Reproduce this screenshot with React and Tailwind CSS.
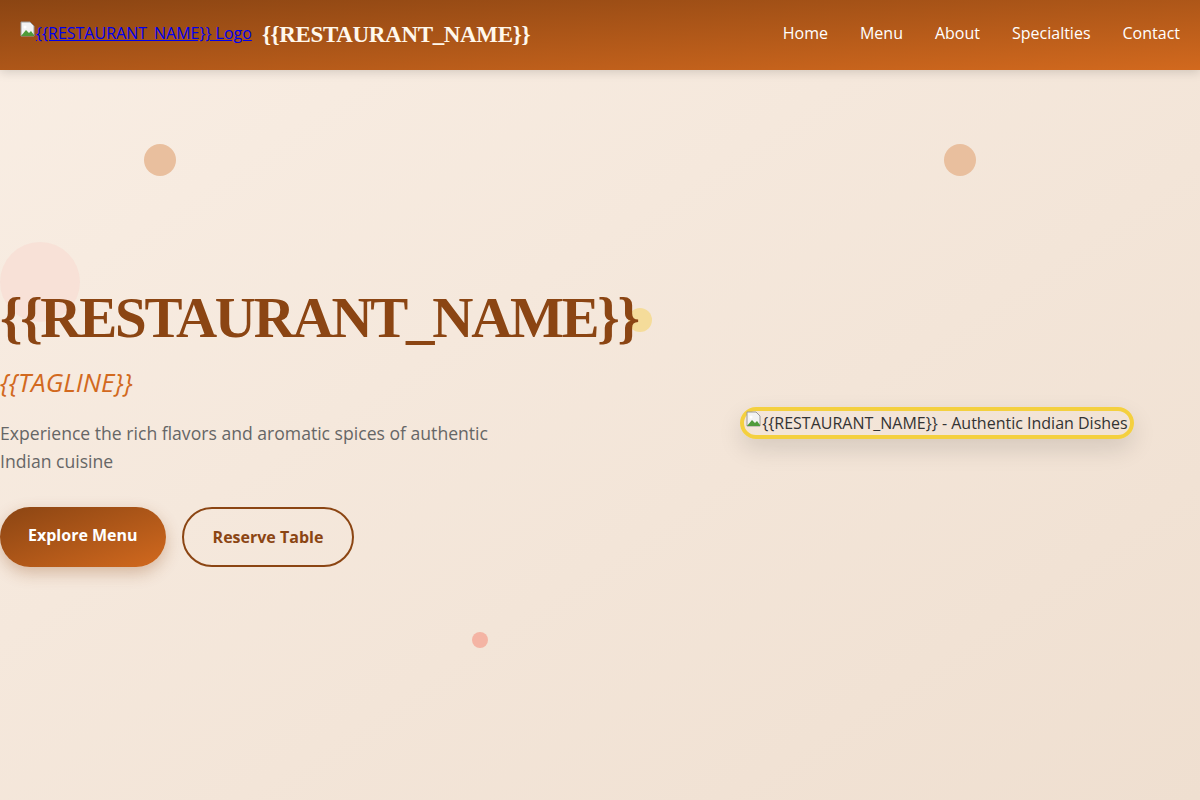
export default function App() {
    const navLinks = ["Home", "Menu", "About", "Specialties", "Contact"];

    return (
        <div className="min-h-screen bg-gradient-to-br from-[#f9eee4] to-[#efdfd0] font-['Open_Sans',sans-serif] overflow-hidden">
            <header className="h-[70px] flex items-center justify-between px-5 bg-gradient-to-br from-[#8b4513] to-[#d2691e] shadow-[0_2px_10px_rgba(0,0,0,0.15)] relative z-10">
                <div className="flex items-center gap-[10px]">
                    <a href="#" className="flex items-center mb-1 text-[16px] text-[#0000ee] underline">
                        <svg width="16" height="16" viewBox="0 0 16 16" className="mb-2">
                            <path d="M1 1h9l4 4v10H1z" fill="#f3f3f3" stroke="#9a9a9a" />
                            <path d="M1 15l5-6 3 3 2-2 3 4v1z" fill="#4f9a3a" />
                            <circle cx="5" cy="6" r="1.5" fill="#fff" />
                        </svg>
                        <span>{"{{RESTAURANT_NAME}} Logo"}</span>
                    </a>
                    <h1 className="font-['Liberation_Serif',serif] font-bold text-[23px] tracking-[-0.015em] text-[#fff8ec]">
                        {"{{RESTAURANT_NAME}}"}
                    </h1>
                </div>
                <nav className="flex items-center gap-8 mb-1 text-white text-[16px]">
                    {navLinks.map((link) => (
                        <a key={link} href="#">{link}</a>
                    ))}
                </nav>
            </header>

            <section className="relative h-[730px] flex items-center">
                <div className="absolute left-[144px] top-[74px] w-8 h-8 rounded-full bg-[#e9bf9e]" />
                <div className="absolute left-[944px] top-[74px] w-8 h-8 rounded-full bg-[#e9bf9e]" />
                <div className="absolute left-0 top-[172px] w-20 h-20 rounded-full bg-[#f8dfd4] opacity-80" />
                <div className="absolute left-[628px] top-[238px] w-6 h-6 rounded-full bg-[#f5dc9a]" />
                <div className="absolute left-[472px] top-[562px] w-4 h-4 rounded-full bg-[#f4b4a4]" />

                <div className="relative w-[674px] pb-[18px]">
                    <h2 className="font-['Liberation_Serif',serif] font-bold text-[57px] leading-[1.15] tracking-[-0.04em] text-[#8b4513]">
                        {"{{RESTAURANT_NAME}}"}
                    </h2>
                    <p className="mt-[15px] text-[26px] leading-[34px] italic text-[#d2691e]">{"{{TAGLINE}}"}</p>
                    <p className="mt-[20px] max-w-[500px] text-[17.6px] leading-[28px] text-[#666]">
                        Experience the rich flavors and aromatic spices of authentic Indian cuisine
                    </p>
                    <div className="mt-8 flex items-center gap-4">
                        <button className="h-[60px] px-[28px] rounded-full bg-gradient-to-br from-[#8b4513] to-[#d2691e] text-white font-bold text-[16px] shadow-[0_6px_16px_rgba(139,69,19,0.3)]">
                            <span className="block mb-1">Explore Menu</span>
                        </button>
                        <button className="h-[60px] px-[29px] rounded-full border-2 border-[#8b4513] text-[#8b4513] font-bold text-[16px]">
                            Reserve Table
                        </button>
                    </div>
                </div>

                <div className="flex-1 flex justify-center pb-6">
                    <div className="flex items-center rounded-full border-4 border-[#f4d03f] px-[2px] shadow-[0_10px_25px_rgba(0,0,0,0.12)] text-[16px] text-[#333]">
                        <svg width="16" height="16" viewBox="0 0 16 16" className="mb-2">
                            <path d="M1 1h9l4 4v10H1z" fill="#f3f3f3" stroke="#9a9a9a" />
                            <path d="M1 15l5-6 3 3 2-2 3 4v1z" fill="#4f9a3a" />
                            <circle cx="5" cy="6" r="1.5" fill="#fff" />
                        </svg>
                        <span>{"{{RESTAURANT_NAME}} - Authentic Indian Dishes"}</span>
                    </div>
                </div>
            </section>
        </div>
    );
}
